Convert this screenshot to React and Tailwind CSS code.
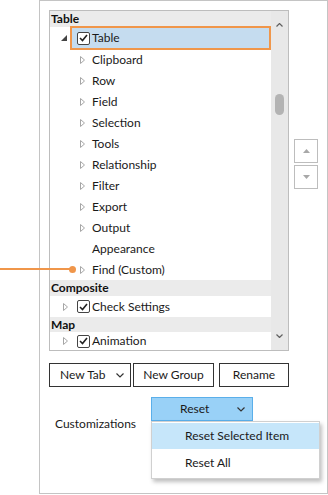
import React from "react";

const font = { fontFamily: "Lato, 'Noto Sans', sans-serif" };

function Collapsed() {
  return (
    <svg width="5" height="8" viewBox="0 0 5 8" className="shrink-0">
      <path d="M0.5 0.5 L4.5 4 L0.5 7.5 Z" fill="white" stroke="#a6a6a6" strokeWidth="1" />
    </svg>
  );
}

function Expanded() {
  return (
    <svg width="6" height="6" viewBox="0 0 6 6" className="shrink-0">
      <path d="M6 0 L6 6 L0 6 Z" fill="#444" />
    </svg>
  );
}

function Check() {
  return (
    <div className="w-[13px] h-[13px] border border-[#444] rounded-[2px] bg-white flex items-center justify-center shrink-0">
      <svg width="9" height="8" viewBox="0 0 9 8">
        <path d="M1 4 L3.5 6.5 L8 1" fill="none" stroke="#222" strokeWidth="1.6" />
      </svg>
    </div>
  );
}

function Header({ children, h = "h-[16px]" }) {
  return (
    <div className={`${h} bg-[#ebebeb] flex items-center pl-[1px] text-[12px] font-bold text-[#111]`}>
      {children}
    </div>
  );
}

function Child({ label, arrow = true }) {
  return (
    <div className="h-[21px] flex items-center pl-[30px] text-[12px] text-[#1a1a1a]">
      <div className="w-[12px] flex items-center">{arrow ? <Collapsed /> : null}</div>
      <span>{label}</span>
    </div>
  );
}

function CheckedRow({ label, h = "h-[21px]" }) {
  return (
    <div className={`${h} flex items-center pl-[13px] text-[12px] text-[#1a1a1a]`}>
      <div className="w-[14px] flex items-center"><Collapsed /></div>
      <Check />
      <span className="ml-[2px]">{label}</span>
    </div>
  );
}

function ChevronDown({ color = "#333" }) {
  return (
    <svg width="8" height="5" viewBox="0 0 8 5">
      <path d="M0.5 0.5 L4 4 L7.5 0.5" fill="none" stroke={color} strokeWidth="1.2" />
    </svg>
  );
}

export default function App() {
  const children = [
    "Clipboard", "Row", "Field", "Selection", "Tools", "Relationship",
    "Filter", "Export", "Output",
  ];
  return (
    <div className="relative w-[328px] h-[495px] bg-white" style={font}>
      <div className="ml-[39px] w-[289px] h-[494px] border border-[#c4c4c4] pl-[9px] pt-[9px] flex flex-col">
        <div className="flex">
          <div className="w-[240px] h-[341px] border border-[#bdbdbd] flex">
            <div className="flex-1 flex flex-col overflow-hidden">
              <Header>Table</Header>
              <div className="h-[22px] flex items-center pl-[11px] text-[12px] text-[#1a1a1a]">
                <div className="w-[9px] flex items-center"><Expanded /></div>
                <div className="flex-1 h-[24px] border-2 border-[#f0964a] bg-[#c5dcef] flex items-center pl-[5px]">
                  <Check />
                  <span className="ml-[2px]">Table</span>
                </div>
              </div>
              {children.map((c) => (
                <Child key={c} label={c} />
              ))}
              <Child label="Appearance" arrow={false} />
              <Child label="Find (Custom)" />
              <Header h="h-[16px]">Composite</Header>
              <CheckedRow label="Check Settings" />
              <Header h="h-[15px]">Map</Header>
              <CheckedRow label="Animation" h="h-[18px]" />
            </div>
            <div className="w-[17px] bg-[#e8e8e8] flex flex-col items-center">
              <div className="h-[16px] flex items-end">
                <svg width="7" height="4" viewBox="0 0 7 4">
                  <path d="M0.5 3.5 L3.5 0.5 L6.5 3.5" fill="none" stroke="#606060" strokeWidth="1.2" />
                </svg>
              </div>
              <div className="mt-[67px] w-[9px] h-[21px] rounded-full bg-[#b3b3b3]" />
              <div className="flex-1" />
              <div className="h-[16px] flex items-start">
                <svg width="7" height="4" viewBox="0 0 7 4">
                  <path d="M0.5 0.5 L3.5 3.5 L6.5 0.5" fill="none" stroke="#606060" strokeWidth="1.2" />
                </svg>
              </div>
            </div>
          </div>
          <div className="ml-[5px] mt-[129px] flex flex-col gap-[2px]">
            <div className="w-[24px] h-[24px] border border-[#bdbdbd] flex items-center justify-center">
              <svg width="7" height="4" viewBox="0 0 7 4"><path d="M0 4 L3.5 0 L7 4 Z" fill="#a8a8a8" /></svg>
            </div>
            <div className="w-[24px] h-[24px] border border-[#bdbdbd] flex items-center justify-center">
              <svg width="7" height="4" viewBox="0 0 7 4"><path d="M0 0 L3.5 4 L7 0 Z" fill="#a8a8a8" /></svg>
            </div>
          </div>
        </div>

        <div className="mt-[12px] flex text-[12px] text-[#1a1a1a]">
          <div className="w-[82px] h-[24px] border border-[#333] flex items-center pl-[10px] pr-[6px]">
            <span className="flex-1">New Tab</span>
            <ChevronDown />
          </div>
          <div className="ml-[2px] w-[81px] h-[24px] border border-[#333] flex items-center justify-center">
            New Group
          </div>
          <div className="ml-[5px] w-[70px] h-[24px] border border-[#333] flex items-center justify-center">
            Rename
          </div>
        </div>

        <div className="mt-[10px] flex items-start text-[12px] text-[#1a1a1a]">
          <span className="ml-[6px] mt-[18px] w-[96px]">Customizations</span>
          <div className="relative">
            <div className="w-[102px] h-[24px] bg-[#99d1f7] border border-[#5aafea] flex items-center pl-[28px] pr-[7px]">
              <span className="flex-1">Reset</span>
              <ChevronDown color="#333" />
            </div>
            <div className="absolute left-0 top-[24px] w-[169px] bg-white border border-[#d0d0d0] shadow-[2px_3px_4px_rgba(0,0,0,0.25)] py-[1px] z-10">
              <div className="h-[26px] bg-[#c6e6fa] flex items-center pl-[33px]">Reset Selected Item</div>
              <div className="h-[28px] flex items-center pl-[33px]">Reset All</div>
            </div>
          </div>
        </div>
      </div>

      <div className="absolute left-0 top-[268px] w-[72px] h-[2px] bg-[#f0964a]" />
      <div className="absolute left-[69px] top-[266px] w-[7px] h-[7px] rounded-full bg-[#f0964a]" />
    </div>
  );
}
